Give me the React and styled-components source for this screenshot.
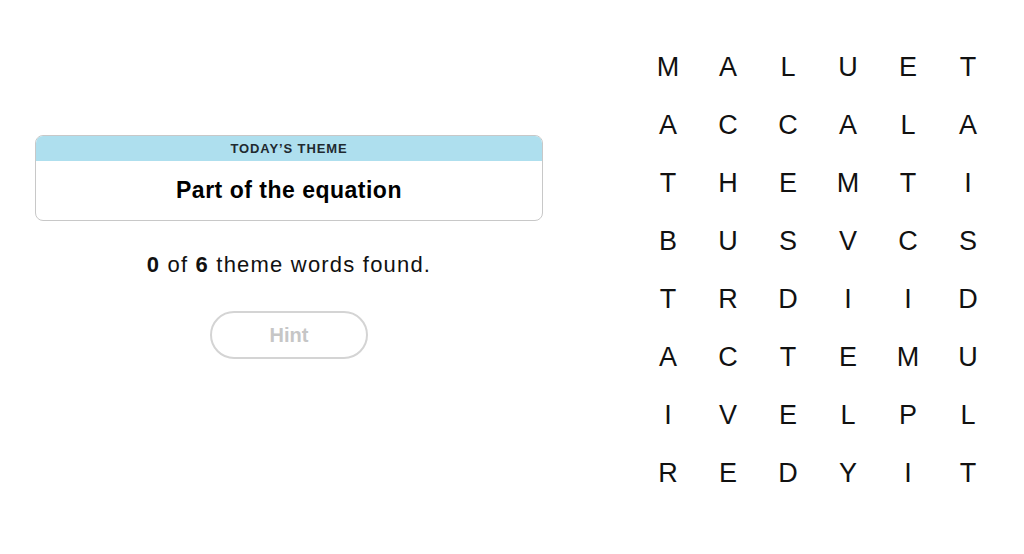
import React from "react";
import styled, { createGlobalStyle } from "styled-components";

const Global = createGlobalStyle`
  html, body { margin: 0; padding: 0; background: #fff; }
  body { font-family: "Liberation Sans", Arial, sans-serif; color: #000; }
`;

const Page = styled.div`
  display: flex;
  width: 1024px;
  height: 554px;
`;

const LeftPanel = styled.section`
  width: 578px;
  box-sizing: border-box;
  padding: 135px 35px 0;
  display: flex;
  flex-direction: column;
  align-items: center;
`;

const ThemeCard = styled.div`
  width: 100%;
  box-sizing: border-box;
  border: 1px solid #c8c8c8;
  border-radius: 8px;
  overflow: hidden;
`;

const ThemeHeader = styled.div`
  background: #aedfee;
  height: 25px;
  display: flex;
  align-items: center;
  justify-content: center;
  font-size: 13px;
  font-weight: 700;
  letter-spacing: 0.9px;
  color: #1f2a30;
`;

const ThemeTitle = styled.div`
  height: 59px;
  display: flex;
  align-items: center;
  justify-content: center;
  font-size: 23px;
  font-weight: 700;
  letter-spacing: 0.5px;
  color: #000;
`;

const Progress = styled.p`
  margin: 32px 0 0;
  font-size: 22px;
  line-height: 24px;
  letter-spacing: 1.2px;
  color: #111;
  b { font-weight: 700; }
`;

const HintButton = styled.button`
  margin-top: 34px;
  width: 158px;
  height: 48px;
  border-radius: 24px;
  border: 2px solid #d4d4d4;
  background: #fff;
  color: #c6c6c6;
  font-family: "Liberation Sans", Arial, sans-serif;
  font-size: 20px;
  font-weight: 700;
  cursor: default;
`;

const Board = styled.section`
  margin-left: 60px;
  padding-top: 38px;
  display: grid;
  grid-template-columns: repeat(6, 60px);
  grid-auto-rows: 58px;
  align-content: start;
`;

const Letter = styled.div`
  display: flex;
  align-items: center;
  justify-content: center;
  font-size: 27px;
  font-weight: 400;
  color: #111;
`;

const rows = [
  "MALUET",
  "ACCALA",
  "THEMTI",
  "BUSVCS",
  "TRDIID",
  "ACTEMU",
  "IVELPL",
  "REDYIT",
];

export default function App() {
  return (
    <>
      <Global />
      <Page>
        <LeftPanel>
          <ThemeCard>
            <ThemeHeader>TODAY’S THEME</ThemeHeader>
            <ThemeTitle>Part of the equation</ThemeTitle>
          </ThemeCard>
          <Progress>
            <b>0</b> of <b>6</b> theme words found.
          </Progress>
          <HintButton>Hint</HintButton>
        </LeftPanel>
        <Board>
          {rows.flatMap((r, i) =>
            r.split("").map((c, j) => <Letter key={`${i}-${j}`}>{c}</Letter>)
          )}
        </Board>
      </Page>
    </>
  );
}
